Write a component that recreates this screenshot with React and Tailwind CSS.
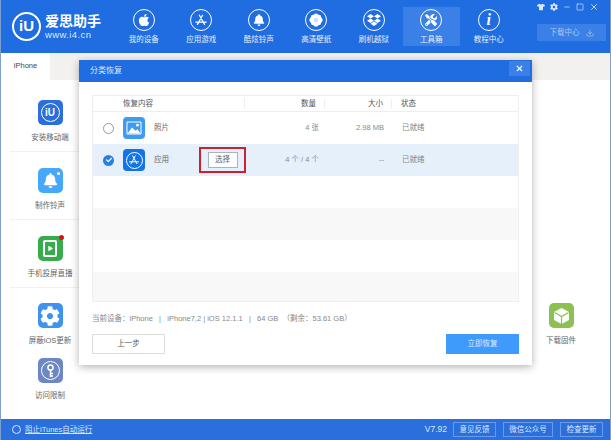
import React from "react";
import { FaApple, FaBell, FaDropbox, FaTools, FaTshirt, FaCog, FaCheck, FaPlay } from "react-icons/fa";
import { FiDownload, FiX, FiMinus, FiSquare } from "react-icons/fi";

const Flower = () => (
  <svg width="14" height="14" viewBox="0 0 14 14" fill="white">
    <circle cx="7" cy="3" r="2.6" />
    <circle cx="7" cy="11" r="2.6" />
    <circle cx="3" cy="7" r="2.6" />
    <circle cx="11" cy="7" r="2.6" />
    <circle cx="4.2" cy="4.2" r="2.4" />
    <circle cx="9.8" cy="4.2" r="2.4" />
    <circle cx="4.2" cy="9.8" r="2.4" />
    <circle cx="9.8" cy="9.8" r="2.4" />
    <circle cx="7" cy="7" r="2" fill="#cfe0fa" />
  </svg>
);

// app store style "A" made of three sticks
const StoreA = ({ size = 14, sw = 1.4 }) => (
  <svg width={size} height={size} viewBox="0 0 16 16" fill="none" stroke="white" strokeWidth={sw} strokeLinecap="round">
    <path d="M9.8 2.5 4 13M6.2 2.5 12 13M2 10.4h12" />
  </svg>
);

const navItems = [
  { label: "我的设备", icon: <FaApple size={14} /> },
  { label: "应用游戏", icon: <StoreA /> },
  { label: "酷炫铃声", icon: <FaBell size={12} /> },
  { label: "高清壁纸", icon: <Flower /> },
  { label: "刷机越狱", icon: <FaDropbox size={14} /> },
  { label: "工具箱", icon: <FaTools size={12} />, active: true },
  { label: "教程中心", icon: <span className="text-[16px] leading-none font-bold italic [font-family:'Liberation_Serif',serif]">i</span> },
];

const NavItem = ({ label, icon, active }) => (
  <div className={`w-[57.5px] h-[39px] flex flex-col items-center pt-[2px] ${active ? "bg-[#3b80e6]" : ""}`}>
    <div className="w-[22px] h-[22px] rounded-full border border-white flex items-center justify-center text-white">
      {icon}
    </div>
    <span className="text-[7.5px] leading-[12px] mt-[3px] text-[#e4eefc] whitespace-nowrap">{label}</span>
  </div>
);

const Tool = ({ bg, label, children, dot, className }) => (
  <div className={`flex flex-col items-center ${className}`}>
    <div className={`relative shrink-0 w-[25px] h-[25px] rounded-[5px] flex items-center justify-center text-white ${bg}`}>
      {children}
      {dot && <span className="absolute -top-[1px] -right-[1px] w-[5px] h-[5px] rounded-full bg-[#d8141c]" />}
    </div>
    <span className="text-[7.5px] leading-[12px] mt-[7px] text-[#666] whitespace-nowrap">{label}</span>
  </div>
);

const Row = ({ className, children }) => (
  <div className={`h-[32px] flex items-center text-[7.5px] text-[#888] ${className}`}>{children}</div>
);

const StateCols = ({ count, size }) => (
  <>
    <span className="w-[79px] -ml-[38px] text-right whitespace-nowrap">{count}</span>
    <span className="w-[65px] text-right whitespace-nowrap">{size}</span>
    <span className="ml-[18px]">已就绪</span>
  </>
);

export default function App() {
  return (
    <div
      className="relative w-[611px] h-[440px] overflow-hidden flex flex-col bg-white border-x border-[#7d9fd0]"
      style={{ fontFamily: '"Liberation Sans", "Noto Sans CJK SC", sans-serif' }}
    >
      {/* top bar */}
      <header className="relative h-[53px] shrink-0 bg-[#1f6de0] flex items-start">
        <div className="w-[114px] pl-[11px] pt-[12px] flex items-center gap-[4px] text-white">
          <div className="w-[29px] h-[29px] rounded-full border-2 border-white flex items-center justify-center text-[15px] font-bold">
            iU
          </div>
          <div className="flex flex-col">
            <span className="text-[14px] leading-[16px] font-bold whitespace-nowrap">爱思助手</span>
            <span className="text-[9.5px] leading-[11px] tracking-[0.4px] text-[#dbe8fb]">www.i4.cn</span>
          </div>
        </div>
        <nav className="flex pt-[7px]">
          {navItems.map((n) => (
            <NavItem key={n.label} {...n} />
          ))}
        </nav>
        <div className="absolute right-[11px] top-[2px] flex items-center gap-[5px] text-[#dbe8fb]">
          <FaTshirt size={8} />
          <FaCog size={8} />
          <FiMinus size={8} />
          <FiSquare size={8} />
          <FiX size={10} />
        </div>
        <div className="absolute left-[536px] top-[24px] w-[69px] h-[17px] bg-[#3b80e6] flex items-center justify-center gap-[6px] text-[7.5px] text-[#a9c8f4]">
          下载中心
          <FiDownload size={8} />
        </div>
      </header>

      {/* tab strip */}
      <div className="h-[27px] shrink-0 bg-[#f2f1f0] flex">
        <div className="w-[49px] bg-white flex items-center justify-center text-[7.5px] text-[#444] pb-[1px]">iPhone</div>
      </div>

      {/* tool grid */}
      <main className="flex-1 flex justify-between pl-[9px] pr-[9px]">
        <div className="w-[80px] flex flex-col pt-[20px]">
          <Tool bg="bg-[#2a6fdc]" label="安装移动端" className="h-[52px] border-b border-[#f1f1f1]">
            <span className="w-[19px] h-[19px] rounded-full border border-white flex items-center justify-center text-[10px] font-bold">iU</span>
          </Tool>
          <Tool bg="bg-[#45a8fb]" label="制作铃声" className="h-[68px] pt-[16px] border-b border-[#f1f1f1]">
            <FaBell size={15} />
            <span className="absolute top-[4px] right-[3px] w-[3px] h-[3px] rounded-full bg-white" />
          </Tool>
          <Tool bg="bg-[#38ac4c]" label="手机投屏直播" dot className="h-[68px] pt-[16px] border-b border-[#f1f1f1]">
            <span className="w-[14px] h-[17px] rounded-[2px] border-2 border-white flex items-center justify-center text-white">
              <FaPlay size={5} />
            </span>
          </Tool>
          <Tool bg="bg-[#3f92ee]" label="屏蔽iOS更新" className="h-[55px] pt-[15px]">
            <FaCog size={20} />
          </Tool>
          <Tool bg="bg-[#6d87c4]" label="访问限制" className="pt-[15px]">
            <span className="w-[19px] h-[19px] rounded-full border border-white flex items-center justify-center">
              <svg width="9" height="14" viewBox="0 0 9 14" fill="none" stroke="white" strokeWidth="1.5">
                <circle cx="4.5" cy="3.5" r="2.6" />
                <path d="M4.5 6v7M4.5 9.5H7M4.5 12H7" />
              </svg>
            </span>
          </Tool>
        </div>
        <div className="w-[80px] flex flex-col pt-[223px]">
          <Tool bg="bg-[#8cc152]" label="下载固件">
            <svg width="17" height="18" viewBox="0 0 17 18">
              <path d="M8.5 1 16 5v8l-7.5 4L1 13V5z" fill="white" />
              <path d="M1.5 5.5 8.5 9.5 15.5 5.5M8.5 9.5V17" fill="none" stroke="#8cc152" strokeWidth="1.2" />
            </svg>
          </Tool>
        </div>
      </main>

      {/* status bar */}
      <footer className="h-[21px] shrink-0 bg-[#2a6fdc] flex items-center text-[7.5px] text-[#dbe8fb] pl-[11px] pr-[7px]">
        <span className="w-[9px] h-[9px] rounded-full border border-[#dbe8fb]" />
        <span className="ml-[4px] underline">阻止iTunes自动运行</span>
        <span className="ml-auto text-[8.5px] mr-[6px]">V7.92</span>
        <span className="w-[43px] h-[15px] border border-[#6a9bea] flex items-center justify-center">意见反馈</span>
        <span className="w-[50px] h-[15px] ml-[7px] border border-[#6a9bea] flex items-center justify-center">微信公众号</span>
        <span className="w-[43px] h-[15px] ml-[7px] border border-[#6a9bea] flex items-center justify-center">检查更新</span>
      </footer>

      {/* restore dialog */}
      <section className="absolute left-[78px] top-[60px] w-[453px] h-[305px] bg-white flex flex-col shadow-[0_2px_8px_rgba(0,0,0,0.3)]">
        <div className="h-[22px] shrink-0 bg-[#1f6de0] flex items-start justify-between pl-[11px] text-[8px] text-[#dbe8fb]">
          <span className="leading-[22px]">分类恢复</span>
          <span className="w-[21px] h-[15px] mt-[1px] mr-[2px] bg-[#3b80e6] flex items-center justify-center text-white">
            <FiX size={9} strokeWidth={3} />
          </span>
        </div>

        <div className="mx-[13px] mt-[13px] h-[207px] border border-[#efefef] flex flex-col overflow-hidden">
          <div className="h-[16px] shrink-0 flex items-center text-[7.5px] text-[#555] border-b border-[#eee]">
            <span className="w-[152px] pl-[30px] border-r border-[#eee]">恢复内容</span>
            <span className="w-[71px] text-right">数量</span>
            <span className="w-[9px] h-[10px] border-r border-[#eee]" />
            <span className="w-[58px] text-right">大小</span>
            <span className="w-[9px] h-[10px] border-r border-[#eee]" />
            <span className="ml-[9px]">状态</span>
          </div>
          <Row>
            <span className="ml-[10px] w-[11px] h-[11px] rounded-full border border-[#999]" />
            <span className="ml-[9px] w-[22px] h-[22px] rounded-[4px] bg-[#3d9bf0] flex items-center justify-center">
              <svg width="16" height="14" viewBox="0 0 16 14">
                <path d="M1 1h14v12H1z" fill="none" stroke="white" strokeWidth="1" />
                <circle cx="11.5" cy="4.2" r="1.4" fill="white" />
                <path d="M1.5 12.5 6 6.5l3.5 3.2 2-1.5 3 4.3z" fill="white" />
              </svg>
            </span>
            <span className="ml-[9px] w-[124px] text-[#666]">照片</span>
            <StateCols count="4 张" size="2.98 MB" />
          </Row>
          <Row className="bg-[#e6f0fb]">
            <span className="ml-[10px] w-[11px] h-[11px] rounded-full bg-[#2a7ee8] flex items-center justify-center text-white">
              <FaCheck size={6} />
            </span>
            <span className="ml-[9px] w-[22px] h-[22px] rounded-[4px] bg-[#1673e6] flex items-center justify-center">
              <span className="w-[17px] h-[17px] rounded-full border border-white flex items-center justify-center">
                <StoreA size={12} sw={1.3} />
              </span>
            </span>
            <span className="ml-[9px] w-[46px] text-[#666]">应用</span>
            <span className="w-[47px] h-[26px] border-2 border-[#cc2230] flex items-center justify-center -ml-[1px] mr-[32px]">
              <span className="w-[30px] h-[16px] border border-[#a9b5b5] bg-white flex items-center justify-center text-[#666]">选择</span>
            </span>
            <StateCols count="4 个 / 4 个" size="--" />
          </Row>
          <Row />
          <Row className="bg-[#f8f8f8]" />
          <Row />
          <Row className="flex-1 bg-[#f8f8f8]" />
        </div>

        <p className="mx-[13px] mt-[11px] text-[7.5px] leading-[12px] text-[#888] whitespace-nowrap">
          当前设备：iPhone&nbsp;&nbsp; | &nbsp;&nbsp;iPhone7,2 | iOS 12.1.1&nbsp;&nbsp; | &nbsp;&nbsp;64 GB &nbsp;（剩余：53.61 GB）
        </p>

        <div className="mx-[13px] mt-[9px] flex justify-between">
          <button className="w-[73px] h-[20px] border border-[#ddd] bg-white text-[7.5px] text-[#555]">上一步</button>
          <button className="w-[73px] h-[20px] bg-[#3f9bfb] text-[7.5px] text-[#dcecff]">立即恢复</button>
        </div>
      </section>
    </div>
  );
}
